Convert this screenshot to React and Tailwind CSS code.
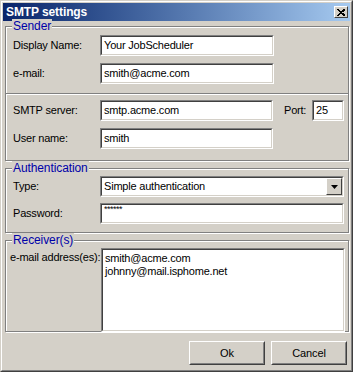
import React from "react";

const font = { fontFamily: '"Liberation Sans", Arial, sans-serif' };

function Sunken({ className = "", children }) {
  return (
    <div
      className={
        "bg-white border border-t-[#808080] border-l-[#808080] border-b-white border-r-white " +
        className
      }
    >
      <div className="h-full w-full border border-t-[#404040] border-l-[#404040] border-b-[#d4d0c8] border-r-[#d4d0c8] overflow-hidden">
        {children}
      </div>
    </div>
  );
}

function Field({ value, className = "" }) {
  return (
    <Sunken className={"h-[21px] " + className}>
      <div className="px-[2px] leading-[17px] text-[11px] tracking-[-0.2px] text-black whitespace-nowrap">
        {value}
      </div>
    </Sunken>
  );
}

function Group({ title, className = "", children }) {
  return (
    <div
      className={
        "relative border border-[#808080] shadow-[1px_1px_0_#fff,inset_1px_1px_0_#fff] " +
        className
      }
    >
      <span className="absolute left-[6px] -top-[8px] bg-[#d4d0c8] px-[1px] text-[12px] leading-[14px] text-[#0000a8] tracking-[-0.1px]">
        {title}
      </span>
      {children}
    </div>
  );
}

function Row({ label, children, className = "" }) {
  return (
    <div className={"flex items-center " + className}>
      <div className="w-[94px] pl-[7px] text-[11px] tracking-[-0.2px] text-black whitespace-nowrap">
        {label}
      </div>
      {children}
    </div>
  );
}

function Button({ children }) {
  return (
    <div className="w-[76px] h-[24px] border border-t-white border-l-white border-b-[#404040] border-r-[#404040]">
      <div className="h-full w-full border border-t-[#d4d0c8] border-l-[#d4d0c8] border-b-[#808080] border-r-[#808080] flex items-center justify-center text-[11px] text-black tracking-[-0.1px]">
        {children}
      </div>
    </div>
  );
}

export default function App() {
  return (
    <div
      style={font}
      className="w-[353px] h-[372px] bg-[#d4d0c8] border border-t-[#d4d0c8] border-l-[#d4d0c8] border-b-[#404040] border-r-[#404040] select-none"
    >
      <div className="h-full w-full border border-t-white border-l-white border-b-[#808080] border-r-[#808080] p-[1px] flex flex-col">
        {/* Title bar */}
        <div className="h-[18px] bg-gradient-to-r from-[#0a246a] to-[#a6caf0] flex items-center justify-between pl-[3px] pr-[2px]">
          <span className="text-white font-bold text-[12px] tracking-[-0.1px]">SMTP settings</span>
          <div className="w-[14px] h-[12px] bg-[#d4d0c8] border border-t-white border-l-white border-b-[#404040] border-r-[#404040] flex items-center justify-center">
            <svg width="8" height="7" viewBox="0 0 8 7">
              <path d="M0.5 0.5 L7 6.5 M1.5 0.5 L8 6.5 M7 0.5 L0.5 6.5 M8 0.5 L1.5 6.5" stroke="#000" strokeWidth="1" shapeRendering="crispEdges" />
            </svg>
          </div>
        </div>

        <div className="flex-1 pl-[2px] pr-[1px] pt-[5px] flex flex-col">
          {/* Sender */}
          <Group title="Sender" className="h-[135px]">
            <div className="pt-[8px] flex flex-col gap-[7px]">
              <Row label="Display Name:">
                <Field value="Your JobScheduler" className="w-[174px]" />
              </Row>
              <Row label="e-mail:">
                <Field value="smith@acme.com" className="w-[174px]" />
              </Row>
            </div>
            <div className="mt-[9px] h-[2px] border-t border-[#808080] border-b border-b-white" />
            <div className="pt-[5px] flex flex-col gap-[7px]">
              <Row label="SMTP server:">
                <Field value="smtp.acme.com" className="w-[173px]" />
                <div className="ml-[11px] w-[28px] text-[11px] tracking-[-0.2px]">Port:</div>
                <Field value="25" className="w-[32px]" />
              </Row>
              <Row label="User name:">
                <Field value="smith" className="w-[173px]" />
              </Row>
            </div>
          </Group>

          {/* Authentication */}
          <Group title="Authentication" className="mt-[7px] h-[65px]">
            <div className="pt-[7px] flex flex-col gap-[6px]">
              <Row label="Type:">
                <Sunken className="h-[21px] w-[244px]">
                  <div className="flex h-full items-center justify-between">
                    <span className="px-[2px] text-[11px] tracking-[-0.2px]">Simple authentication</span>
                    <div className="w-[16px] h-[17px] bg-[#d4d0c8] border border-t-white border-l-white border-b-[#404040] border-r-[#404040] flex items-center justify-center">
                      <svg width="7" height="4" viewBox="0 0 7 4">
                        <path d="M0 0 H7 L3.5 4 Z" fill="#000" />
                      </svg>
                    </div>
                  </div>
                </Sunken>
              </Row>
              <Row label="Password:">
                <Sunken className="h-[21px] w-[244px]">
                  <div className="px-[2px] text-[9px] leading-[9px] tracking-[-0.5px]">******</div>
                </Sunken>
              </Row>
            </div>
          </Group>

          {/* Receivers */}
          <Group title="Receiver(s)" className="mt-[7px] h-[92px] flex">
            <div className="w-[95px] pl-[4px] pt-[8px] text-[11px] tracking-[-0.2px] whitespace-nowrap">e-mail address(es):</div>
            <Sunken className="mt-[7px] flex-1 mr-[3px] -mb-[1px]">
              <div className="px-[2px] pt-[2px] text-[11px] leading-[13px] tracking-[-0.2px]">
                <div>smith@acme.com</div>
                <div>johnny@mail.isphome.net</div>
              </div>
            </Sunken>
          </Group>

          {/* Buttons */}
          <div className="flex justify-end gap-[6px] pr-[2px] mt-[9px]">
            <Button>Ok</Button>
            <Button>Cancel</Button>
          </div>
        </div>
      </div>
    </div>
  );
}
